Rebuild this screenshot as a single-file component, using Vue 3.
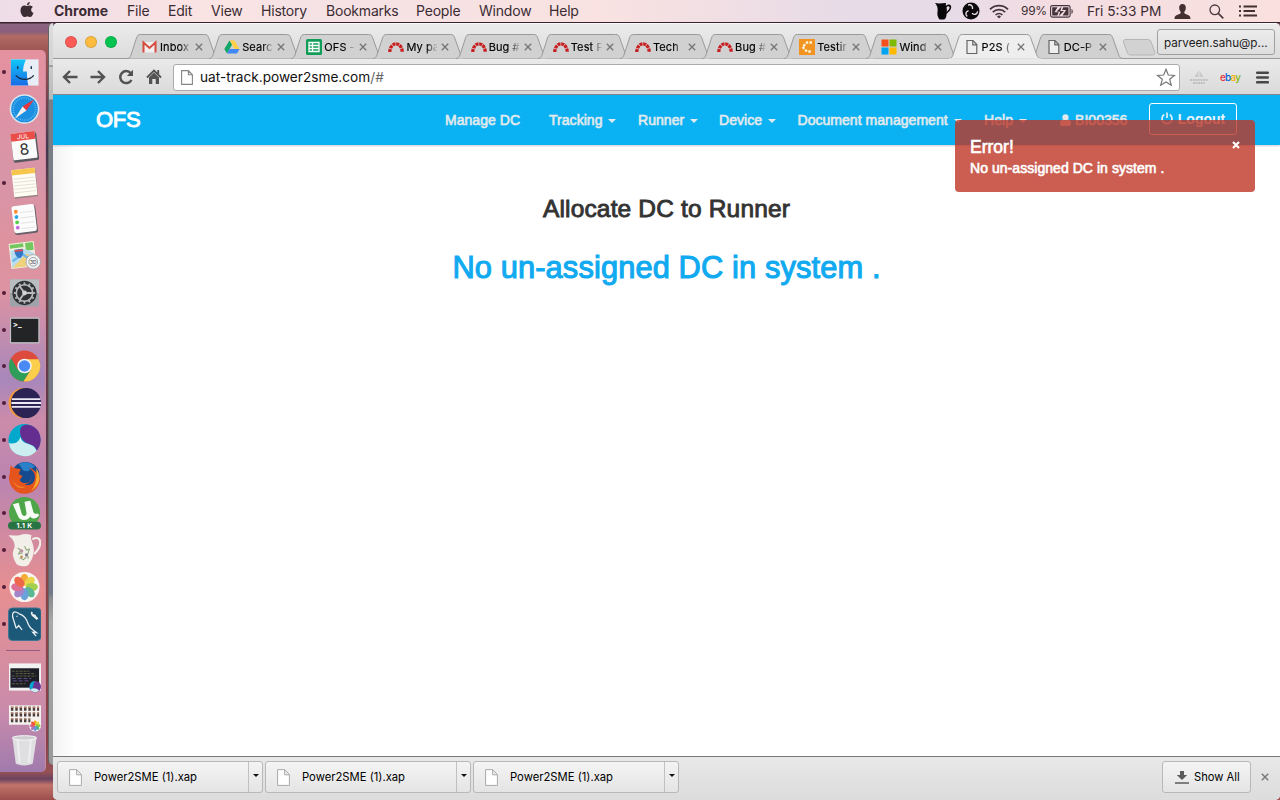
<script setup>
const menus = [
  { t: 'Chrome', w: 73, b: true }, { t: 'File', w: 41 }, { t: 'Edit', w: 43 }, { t: 'View', w: 50 },
  { t: 'History', w: 65 }, { t: 'Bookmarks', w: 90 }, { t: 'People', w: 63 }, { t: 'Window', w: 70 }, { t: 'Help', w: 40 },
]
const tabs = [
  { t: 'Inbox', i: 'gmail' }, { t: 'Searc', i: 'drive' }, { t: 'OFS -', i: 'sheets' }, { t: 'My pa', i: 'redmine' },
  { t: 'Bug #', i: 'redmine' }, { t: 'Test F', i: 'redmine' }, { t: 'Tech', i: 'redmine' }, { t: 'Bug #', i: 'redmine' },
  { t: 'Testir', i: 'orange' }, { t: 'Wind', i: 'ms' }, { t: 'P2S (', i: 'doc', on: true }, { t: 'DC-P', i: 'doc' },
]
const nav = [
  { t: 'Manage DC', w: 104 }, { t: 'Tracking', w: 89, c: true }, { t: 'Runner', w: 81, c: true },
  { t: 'Device', w: 78.5, c: true }, { t: 'Document management', w: 186.5, c: true }, { t: 'Help', w: 76, c: true },
]
const petals = ['#f5a623', '#e8d33a', '#9ccb3b', '#4db28a', '#5b9bd8', '#9a78c4', '#d9628e', '#ee5a3a']
const downloads = [1, 2, 3]
const teeth = [0, 30, 60, 90, 120, 150, 180, 210, 240, 270, 300, 330]
</script>

<template>
  <div class="screen">
    <header class="menubar">
      <svg class="apple" width="14" height="16" viewBox="0 0 14 16"><path d="M9.8 0c.1 1.700-1.200 3.200-2.900 3.300C6.700 1.700 8.200.2 9.800 0zM7.100 4.200c.6 0 1.500-.8 2.900-.7 1.100.1 2.100.5 2.800 1.500-2.500 1.600-2 4.900.7 5.900-.6 1.600-1.900 4.200-3.400 4.200-1 0-1.400-.6-2.700-.6s-1.700.6-2.700.6C2.800 15.200.4 11.500.5 8.200c.1-2.900 1.900-4.600 3.800-4.600 1.200 0 2.100.6 2.800.6z" fill="#3b2c33"/></svg>
      <nav class="menus"><span v-for="m in menus" :key="m.t" :class="{ bold: m.b }" :style="{ width: m.w + 'px' }">{{ m.t }}</span></nav>
      <div class="status">
        <svg class="s1" width="17" height="18" viewBox="0 0 17 18"><path d="M0 1l4 .5 7-.5c-.3 1-.3 2 0 3 2.500-2.500 5.500-1.500 5.200 1.500-.3 3-3 4.500-4.700 6.500.2 2-.6 4.500-2.200 5.500H4.500C2.500 15 2 12 2.600 9 3 6 2 3 0 1zm11.500 4.500c.5 1.500.5 3 .2 4.500C13.500 8 15 6.500 14.500 4.800c-.6-1-2.200-.6-3 .7z" fill="#080608" fill-rule="evenodd"/></svg>
        <svg class="s2" width="18" height="18" viewBox="0 0 18 18"><circle cx="9" cy="9" r="8.500" fill="#0b090b"/><g fill="none" stroke="#eadce6" stroke-width="1.400"><path d="M6 3c3-1 5 1 4.500 4"/><path d="M6 3c3-1 5 1 4.500 4" transform="rotate(120 9 9)"/><path d="M6 3c3-1 5 1 4.500 4" transform="rotate(240 9 9)"/></g></svg>
        <svg class="s3" width="20" height="15" viewBox="0 0 20 15"><g fill="none" stroke="#43343c" stroke-width="1.700"><path d="M1 5.300a12.700 12.700 0 0 1 18 0"/><path d="M3.800 8.200a8.700 8.700 0 0 1 12.400 0"/><path d="M6.600 11a4.900 4.900 0 0 1 6.800 0"/></g><path d="M10 14.500l-2-2a2.800 2.800 0 0 1 4 0z" fill="#43343c"/></svg>
        <span class="pct">99%</span>
        <svg class="s4" width="24" height="13" viewBox="0 0 24 13"><rect x=".6" y=".6" width="19.500" height="11.500" rx="1.800" fill="none" stroke="#43343c" stroke-width="1.100"/><path d="M2.200 2.200h5.300L4.500 7.200h4.200l-1.300 3.400H2.200zM13.300 2.200h5.200v8.400h-6l3.600-5.600h-4z" fill="#43343c"/><path d="M11.500 1.500L6.500 6.800h3.700L8.700 11.300 14 6h-3.600z" fill="#43343c"/><path d="M21.500 4v5c1.700-.5 1.700-4.500 0-5z" fill="#43343c"/></svg>
        <span class="clock">Fri 5:33 PM</span>
        <svg class="s5" width="17" height="15" viewBox="0 0 17 15"><path d="M8.500 0c2.300 0 3.600 1.800 3.300 4.200-.2 1.800-.9 2.800-1.400 3.600-.5 1.400.2 2 1.600 2.500 2.700.9 4.500 1.500 4.500 4.700H.5c0-3.200 1.800-3.800 4.500-4.700 1.400-.5 2.100-1.100 1.600-2.500-.5-.8-1.200-1.800-1.400-3.600C4.900 1.800 6.200 0 8.500 0z" fill="#43302f"/></svg>
        <svg class="s6" width="15" height="15" viewBox="0 0 15 15"><circle cx="5.800" cy="5.800" r="4.800" fill="none" stroke="#4b3a3b" stroke-width="1.300"/><path d="M9.300 9.300l5 5" stroke="#4b3a3b" stroke-width="1.700"/></svg>
        <svg class="s7" width="19" height="12" viewBox="0 0 19 12"><path d="M4.500 1.500H18M4.500 6H16M4.500 10.500H18" stroke="#43302f" stroke-width="1.900"/><path d="M0 1.500h2M0 6h2M0 10.500h2" stroke="#43302f" stroke-width="1.900"/></svg>
      </div>
    </header>

    <main class="desk">
      <aside class="dock">
        <div class="slot"><svg viewBox="0 0 34 34"><defs><linearGradient id="fn" x2="0" y2="1"><stop stop-color="#10c8fa"/><stop offset="1" stop-color="#1a6be5"/></linearGradient></defs><path d="M3 4h28.500v27H3z" fill="#e8eef5"/><path d="M3 4h15.500c-2 4-3 8-3 12.500h4c0 5 .4 10 1.500 14.500H3z" fill="url(#fn)"/><path d="M10 11v3M24 11v3" stroke="#183552" stroke-width="1.500"/><path d="M8 20.500c5 5.500 14 5.500 18.500 0" fill="none" stroke="#14273c" stroke-width="1.400"/></svg></div>
        <div class="slot"><svg viewBox="0 0 34 34"><circle cx="17" cy="17" r="15.300" fill="#dce6ec"/><circle cx="17" cy="17" r="13.700" fill="#1b8fe2"/><circle cx="17" cy="17" r="11.500" fill="none" stroke="#8fd0f5" stroke-width="1.500" stroke-dasharray=".6 1.400"/><path d="M27 7L15 14.500l4 4z" fill="#e8343a"/><path d="M7 27l12-8.500-4-4z" fill="#f3f1ef"/></svg></div>
        <div class="slot"><svg viewBox="0 0 34 34"><g transform="rotate(-7 17 17)"><rect x="4" y="4" width="26.500" height="29" rx="2" fill="#59585f"/><rect x="4" y="3" width="25" height="27.500" rx="1.500" fill="#fafafa"/><path d="M4 3h25v8H4z" fill="#ea4c48"/><text x="16.500" y="9.500" font-size="6.500" text-anchor="middle" fill="#fff">JUL</text><text x="16.500" y="26" font-size="16" text-anchor="middle" fill="#303030">8</text></g></svg></div>
        <div class="slot run"><svg viewBox="0 0 34 34"><g transform="rotate(-6 17 17)"><path d="M5.500 3h24v29h-24z" fill="#9a8380"/><path d="M5 2.500h24v28H5z" fill="#fffdf3"/><path d="M5 2.500h24v5.500H5z" fill="#f7c64d"/><path d="M6 12h22M6 15.500h22M6 19h22M6 22.500h22M6 26h22" stroke="#d8d5cc" stroke-width=".7"/></g></svg></div>
        <div class="slot"><svg viewBox="0 0 34 34"><g transform="rotate(-7 17 17)"><rect x="5.500" y="3.500" width="24" height="29" rx="2.500" fill="#67606a"/><rect x="5" y="2.500" width="23.500" height="28" rx="2.500" fill="#fcfcfc"/><circle cx="9" cy="8.500" r="2" fill="#ff8c2e"/><circle cx="9" cy="14" r="2" fill="#28a9e6"/><circle cx="9" cy="19.500" r="2" fill="#55cf48"/><circle cx="9" cy="25" r="2" fill="#c66be0"/><path d="M13 10h14M13 15.500h14M13 21h14M13 26.500h14" stroke="#ddd" stroke-width=".8"/></g></svg></div>
        <div class="slot"><svg viewBox="0 0 34 34"><g transform="rotate(-7 15 16)"><path d="M2 3h26v26H2z" fill="#f4efdf"/><path d="M3 4h14v4H3zM19 4h8v8h-8z" fill="#73c75e"/><path d="M3 28V10h15l9 5v13z" fill="#b9dcef"/><path d="M3 28L19 15l8 5v8z" fill="#f0d27b"/><path d="M4 21l11-6 12 11" stroke="#6cb8ee" stroke-width="2.500" fill="none"/><path d="M7.500 9.500h8.500c.6 5-1 8-4.200 9.500-3.300-1.500-4.900-4.500-4.300-9.500z" fill="#3577c7"/><path d="M7.500 11h8.500" stroke="#df4c43" stroke-width="2"/></g><circle cx="26" cy="23" r="7.500" fill="#f1f2f4" stroke="#a7a9ae"/><circle cx="26" cy="23" r="4.500" fill="none" stroke="#888" stroke-width=".8"/><text x="26" y="25" text-anchor="middle" font-size="5" fill="#333">3D</text></svg></div>
        <div class="slot run"><svg viewBox="0 0 34 34"><rect x="2" y="3" width="30" height="28" rx="1" fill="#9da3a8"/><rect x="2" y="3" width="30" height="14" fill="#b8bdc1"/><circle cx="17" cy="17" r="12.500" fill="#303235"/><g stroke="#aeb0b2" stroke-width="2"><path v-for="a in teeth" :key="a" d="M17 6v3" :transform="`rotate(${a} 17 17)`"/></g><circle cx="17" cy="17" r="8.500" fill="none" stroke="#b9bbbd" stroke-width="1.700"/><path d="M17 17h8M17 17l-5-7M17 17l-5 7" stroke="#b9bbbd" stroke-width="2"/><circle cx="17" cy="17" r="2.500" fill="#d0d1d2"/></svg></div>
        <div class="slot run"><svg viewBox="0 0 34 34"><rect x="2" y="4" width="30.500" height="27" rx="1.500" fill="#bfc1c3"/><rect x="3.200" y="5.500" width="28" height="24" fill="#222426"/><text x="5" y="14" font-size="8" font-weight="700" fill="#f2f2f2">&gt;_</text></svg></div>
        <div class="slot run"><svg viewBox="0 0 34 34"><circle cx="17" cy="17" r="16" fill="#dc4b3e"/><path d="M3.100 9A16 16 0 0 0 16 33l7.500-12.500L17 24l-7-3.500z" fill="#2f9e5b"/><path d="M31.500 10H17l6.700 10.500L16 33A16 16 0 0 0 31.500 10z" fill="#fbcf4b"/><circle cx="17" cy="17" r="7.500" fill="#f3f3f3"/><circle cx="17" cy="17" r="5.900" fill="#4a8af4"/></svg></div>
        <div class="slot run"><svg viewBox="0 0 34 34"><circle cx="16" cy="17" r="15.500" fill="#f49a3b"/><circle cx="18.500" cy="17" r="15.500" fill="#2b2354"/><path d="M4 13h29.500M3.500 17H34M4 21h29.500" stroke="#ede9f6" stroke-width="2"/></svg></div>
        <div class="slot run"><svg viewBox="0 0 34 34"><circle cx="17" cy="17" r="16.500" fill="#00a8cc"/><path d="M14 3C19-1 28 2 31.500 8.500c3.500 7 2.500 14-2 19.500-1-5-5-6-9-7.500C13 18 10.500 8.500 14 3z" fill="#662d91"/><path d="M.8 20C7 22 11 19 13 14c1 5 4 6 8 7 4 1 7 3 8.500 7A16.500 16.500 0 0 1 .8 20z" fill="#cdeef0"/></svg></div>
        <div class="slot run"><svg viewBox="0 0 34 34"><circle cx="18" cy="16" r="14.500" fill="#164a8e"/><path d="M11 4c5-4 14-2 17 3-4 0-4 4-9 4s-4-4-8-7z" fill="#2b81c9"/><path d="M3 5c1 2 3 3 5 3l5 1-2 5 4 2-3 4c3 5 10 4 12-1 2-6-1-9-2-12 6 3 10 8 11 13A16 16 0 1 1 2 13c0-3 0-6 1-8z" fill="#e5541d"/><path d="M22 8c5 3 7 8 5 13-2 4-6 5-10 4 3-1 6-3 7-6 1-5-1-8-2-11z" fill="#164a8e"/><path d="M29 8c6 8 4 18-5 23 5-5 6-14 5-23z" fill="#f8a92f"/><path d="M4 18c2 6 7 10 14 9-4 3-11 2-14-9z" fill="#f38128"/></svg></div>
        <div class="slot run"><svg viewBox="0 0 34 34"><circle cx="17" cy="16.500" r="16" fill="#4da748"/><path d="M5 8l6-1.500 3 11c1 4 6 3 5-1L17 5.500l6-1 3 11c.5 2 2.500 3 5 2l1 2c-3 4-7 4-9 1-3 5-11 5-13-1z" fill="#f7fbf5"/><rect x="0" y="26" width="34" height="8" rx="4" fill="#287343"/><text x="17" y="32.500" font-size="7" font-weight="700" letter-spacing=".4" text-anchor="middle" fill="#fff">1.1 K</text></svg></div>
        <div class="slot run"><svg viewBox="0 0 34 34"><path d="M25 6c9-5 12 5 2 15" fill="none" stroke="#f2eee8" stroke-width="2.200"/><path d="M.5 2c4-1 8 1 12-.5s8-1.500 12 .5c-3 4 3 8 2 17-1 8-4 10-5 13-2 3-12 2-13-1-3-5-5-10-2-16C8 9 4 5 .5 2z" fill="#f2eee8"/><path d="M10 15l3 2-2 4 4-1M17 13l2 4 3-1-2 6 1 4M12 25l4 2 3-3" fill="none" stroke="#8fa67a" stroke-width="1.100"/><circle cx="14" cy="18" r="1.800" fill="#b893a5"/><circle cx="19" cy="22" r="1.600" fill="#7c7d8e"/><circle cx="14" cy="24" r="1.300" fill="#c08a49"/></svg></div>
        <div class="slot run"><svg viewBox="0 0 34 34"><circle cx="17" cy="17" r="15.500" fill="#f8f6f3"/><g opacity=".9"><ellipse v-for="(p, k) in petals" :key="p" cx="17" cy="9.500" rx="4.200" ry="6.200" :fill="p" :transform="`rotate(${k * 45} 17 17)`"/></g></svg></div>
        <div class="slot run"><svg viewBox="0 0 34 34"><rect x=".5" y=".5" width="33.500" height="33.500" rx="4" fill="#1c5878" stroke="#3f7694"/><path d="M8.500 21.500C7 17 6.500 15 5.500 12 4 8 4.500 4.500 7 4.500c2 0 3 1 4.500 2 6 1.500 8 6 9.500 11 1.500 4 4.500 5 8.500 8.500l-4-.5 3.500 4M8.500 21.500l2.500-3 3.500 4.500M9 8.500l.5 1" fill="none" stroke="#e9f1f5" stroke-width="1.300"/><path d="M25.500 7.500l5 4.500" stroke="#f0f0f0" stroke-width="2.500"/><path d="M24.500 4.500c-.5 3 1 4.500 4 3.500" fill="none" stroke="#f0f0f0" stroke-width="1.800"/></svg></div>
        <hr class="rule" />
        <div class="slot mini"><svg viewBox="0 0 34 34"><rect x="1" y="3" width="33" height="28" fill="#f2f2f3"/><path d="M2.500 8H32v20H2.500z" fill="#1c1d25"/><path d="M4 11h18M8 13.500h20M4 16h25M4 24h14" stroke="#686a45" stroke-width=".9" stroke-dasharray="3 1"/><path d="M4 18.500h20M5 21h16" stroke="#66518c" stroke-width="1" stroke-dasharray="4 2"/><circle cx="28" cy="27" r="6" fill="#6a3593"/><path d="M28 21a6 6 0 0 0-5 9c4 0 2-6 5-9z" fill="#00a8cc"/><path d="M23 30c3-2 6-2 9 1-3 3-7 2-9-1z" fill="#cdeef0"/></svg></div>
        <div class="slot mini b"><svg viewBox="0 0 34 34"><rect x="1" y="6" width="33" height="20" fill="#f4f1ef"/><path d="M3 9.500h29M3 15.500h29M3 21.500h20" stroke="#4a3a38" stroke-width="4" stroke-dasharray="2.500 2"/><path d="M3 8h29M3 14h29M3 20h20" stroke="#b98672" stroke-width="1.400" stroke-dasharray="2.500 2"/><circle cx="28" cy="27" r="6" fill="#fff"/><ellipse v-for="(p, k) in petals" :key="p" cx="28" cy="24" rx="1.700" ry="2.600" :fill="p" :transform="`rotate(${k * 45} 28 27)`"/></svg></div>
        <div class="slot mini c"><svg viewBox="0 0 34 34"><path d="M4.500 3L8 30c3 2.500 14.500 2.500 17.500 0L29.500 3z" fill="#dfdfe2"/><path d="M10 5l2 24M23.500 5l-2 24" stroke="#eee" stroke-width="2"/><ellipse cx="17" cy="3.500" rx="12.500" ry="2.300" fill="#cfcfd3" stroke="#f7f7f8"/></svg></div>
      </aside>
      <div class="behind"></div>
      <section class="window">
        <div class="strip">
          <div class="lights"><i class="r"></i><i class="y"></i><i class="g"></i></div>
          <div class="tabs">
            <div v-for="(tab, n) in tabs" :key="n" class="tab" :class="{ on: tab.on }">
              <svg class="shape" width="92" height="26" viewBox="0 0 92 26"><path d="M0 24.500c2.500-.3 3-1.200 4-3.500L9.500 4c1-2.500 1.500-3.500 4-3.500h64c2.500 0 3.300 1 4.200 3.300l6 17c1 2.500 1.500 3.400 4.300 3.700" /><path v-if="tab.on" class="join" d="M0 25.200h92" /></svg>
              <div class="inner">
                <svg class="fav" width="16" height="16" viewBox="0 0 16 16">
                  <g v-if="tab.i === 'gmail'"><path d="M1 3h13v10.500H1z" fill="#f1eeee"/><path d="M1.500 13.500V3.500L7.500 9l6-5.500v10" fill="none" stroke="#d54b3d" stroke-width="2"/></g>
                  <g v-else-if="tab.i === 'drive'"><path d="M5.500 1.500h5l5 8.500h-5z" fill="#ffcf48"/><path d="M5.500 1.500L8 5.800 3 14.500.3 10z" fill="#11a566"/><path d="M5.500 10h10L13 14.500H3z" fill="#4286f5"/></g>
                  <g v-else-if="tab.i === 'sheets'"><rect width="16" height="16" rx="1.500" fill="#0f9d58"/><path d="M3 3.500h10v9H3zM3 6.500h10M3 9.500h10M6.500 3.500v9" fill="none" stroke="#fff" stroke-width="1.300"/></g>
                  <path v-else-if="tab.i === 'redmine'" d="M1.800 13a6.200 8.200 0 0 1 12.400 0" fill="none" stroke="#c81e20" stroke-width="3.300" stroke-dasharray="3.100 .7"/>
                  <g v-else-if="tab.i === 'orange'"><rect width="16" height="16" fill="#f19421"/><path d="M13 3.500H8L3.500 8 8 12.500h5" fill="none" stroke="#fff3da" stroke-width="2.300" stroke-dasharray="2.500 1.300"/></g>
                  <g v-else-if="tab.i === 'ms'"><path d="M.5.500h7v7h-7z" fill="#f6511d"/><path d="M8.500.500h7v7h-7z" fill="#7fba00"/><path d="M.5 8.500h7v7h-7z" fill="#01a4ef"/><path d="M8.500 8.500h7v7h-7z" fill="#ffb901"/></g>
                  <path v-else d="M3 1.500h6l3.800 4v9H3zM8.800 1.800v4h3.700" fill="#eee" stroke="#656565" stroke-width="1.200"/>
                </svg>
                <span class="title">{{ tab.t }}</span>
                <svg class="x" width="8" height="8" viewBox="0 0 8 8"><path d="M.8.8l6.400 6.400M7.200.8L.8 7.200" stroke="#757575" stroke-width="1.300"/></svg>
              </div>
            </div>
          </div>
          <svg class="newtab" width="34" height="17" viewBox="0 0 34 17"><path d="M4 .5h21.500c2 0 3 .7 3.700 2.500l3.500 10c.5 2-.2 3-2 3H9c-2 0-3-.7-3.700-2.500L1.500 3.500C1 1.500 2 .5 4 .5z" fill="#d2d2d2" stroke="#b5b5b5"/></svg>
          <div class="profile">parveen.sahu@p...</div>
        </div>

        <div class="toolbar">
          <svg width="16" height="14" viewBox="0 0 16 14"><path d="M15.500 7H2M8 1L2 7l6 6" fill="none" stroke="#525252" stroke-width="2.400"/></svg>
          <svg width="16" height="14" viewBox="0 0 16 14"><path d="M.5 7H14M8 1l6 6-6 6" fill="none" stroke="#525252" stroke-width="2.400"/></svg>
          <svg width="16" height="16" viewBox="0 0 16 16"><path d="M12.800 4.200A6 6 0 1 0 13.500 11" fill="none" stroke="#525252" stroke-width="2.500"/><path d="M15 .8V7H8.800z" fill="#525252"/></svg>
          <svg width="16" height="16" viewBox="0 0 16 16"><path d="M1 8.500L8 1.500l7 7M12.200 1v4" fill="none" stroke="#525252" stroke-width="1.900"/><path d="M3 8.500l5-5 5 5V15H9.700v-5H6.300v5H3z" fill="#525252"/></svg>
          <div class="omni">
            <svg width="12" height="15" viewBox="0 0 12 15"><path d="M.6.600h6.800l4 4.200v9.600H.6zM7.400.800v4h4" fill="#fff" stroke="#858585" stroke-width="1.100"/></svg>
            <span class="url">uat-track.power2sme.com<em>/#</em></span>
            <svg class="star" width="20" height="19" viewBox="0 0 20 19"><path d="M10 1.300l2.300 5.700 6.200.4-4.800 3.900 1.600 6L10 14l-5.300 3.300 1.600-6-4.800-3.900 6.200-.4z" fill="#fff" stroke="#777" stroke-width="1.200"/></svg>
          </div>
          <div class="ext"><svg width="18" height="16" viewBox="0 0 18 16"><path d="M9 1l4.500 7h-9z" fill="#c9c9c9"/><path d="M9 1v7" stroke="#e6e6e6"/><path d="M0 11h18M3 14h12" stroke="#c0c0c0" stroke-width="2" stroke-dasharray="2 .6"/></svg></div>
          <div class="ebay"><b>e</b><b>b</b><b>a</b><b>y</b></div>
          <svg class="burger" width="13" height="13" viewBox="0 0 13 13"><path d="M1.200 1.700h10.600M1.200 6.500h10.600M1.200 11.300h10.600" stroke="#484848" stroke-width="2.600" stroke-linecap="round"/></svg>
        </div>

        <div class="page">
          <div class="navbar">
            <div class="brand">OFS</div>
            <nav class="links">
              <span v-for="l in nav" :key="l.t" :style="{ width: l.w + 'px' }">{{ l.t }}<i v-if="l.c" class="caret"></i></span>
              <span class="user"><svg width="11" height="12" viewBox="0 0 11 12"><circle cx="5.500" cy="3.300" r="3.100" fill="#e3eaed"/><path d="M0 10c0-3 1.300-4.500 3-4.500 1.500 1.200 3.500 1.200 5 0 1.700 0 3 1.500 3 4.500 0 1.300-.8 2-2 2H2c-1.200 0-2-.7-2-2z" fill="#e3eaed"/></svg>BI00356</span>
            </nav>
            <button class="logout"><svg width="12" height="13" viewBox="0 0 12 13"><path d="M3.300 2.500a5 5 0 1 0 5.400 0M6 .500v5.500" fill="none" stroke="#dff1f9" stroke-width="1.700"/></svg>Logout</button>
          </div>
          <h3>Allocate DC to Runner</h3>
          <h2>No un-assigned DC in system .</h2>
          <div class="toast">
            <svg width="8" height="8" viewBox="0 0 8 8"><path d="M1 1l6 6M7 1L1 7" stroke="#fff" stroke-width="2.100"/></svg>
            <div class="tt">Error!</div>
            <div class="tm">No un-assigned DC in system .</div>
          </div>
        </div>

        <footer class="shelf">
          <div v-for="d in downloads" :key="d" class="dl">
            <svg width="13" height="17" viewBox="0 0 13 17"><path d="M.6.600h7l4.800 5v10.800H.6zM7.600.800v5h4.600" fill="#fff" stroke="#a9a9a9"/></svg>
            <span>Power2SME (1).xap</span>
            <div class="drop"><i></i></div>
          </div>
          <div class="all"><svg width="14" height="13" viewBox="0 0 14 13"><path d="M5 0h4v4h3.200L7 9 1.800 4H5z" fill="#5a5a5a"/><path d="M0 12h14" stroke="#5a5a5a" stroke-width="1.500"/></svg><span>Show All</span></div>
          <svg class="sx" width="8" height="8" viewBox="0 0 8 8"><path d="M.8.8l6.400 6.400M7.200.8L.8 7.200" stroke="#777" stroke-width="1.400"/></svg>
        </footer>
      </section>
    </main>
  </div>
</template>

<style>
body { overflow: hidden; }
</style>
<style scoped>
* { box-sizing: border-box; }
svg { flex: none; display: block; }
.screen { width: 1280px; height: 800px; display: flex; flex-direction: column; font-family: Inter, "Liberation Sans", sans-serif; overflow: hidden; background: linear-gradient(180deg, #3b2430 0, #3b2430 23px, #8b6580 24px, #8a5f7d 32px, #b26a64 36px, #9d5554 51px, #77434e 100px, #433850 150px, #7b4045 220px, #55394d 450px, #8c4543 560px, #874049 740px, #965155 772px, #6b4260 779px, #c17469 785px, #9b4d4b 800px); }
.menubar { height: 22px; display: flex; align-items: center; background: linear-gradient(90deg, #eedce7 0, #fbe4e3 220px, #f5e2e5 300px, #f9e2e1 600px, #e7dbe7 850px, #e7dbe8 950px, #f3dde2 1040px, #fae1df 1280px); color: #3b2c33; font-size: 14px; line-height: 22px; }
.apple { margin-left: 20px; margin-top: -2px; }
.menus { display: flex; margin-left: 20px; }
.menus span { white-space: nowrap; letter-spacing: -.2px; }
.menus .bold { font-weight: 700; letter-spacing: 0; }
.status { flex: 1; display: flex; align-items: center; justify-content: flex-end; padding-right: 22px; white-space: nowrap; }
.s2 { margin-left: 10px; } .s3 { margin-left: 9px; }
.pct { font-size: 12px; margin-left: 12px; width: 29px; letter-spacing: -.3px; }
.s4 { margin-top: 1px; }
.clock { margin-left: 13px; width: 76px; letter-spacing: 0; font-size: 13.700px; }
.s5 { margin-left: 11px; } .s6 { margin-left: 18px; } .s7 { margin-left: 15px; }
.desk { flex: 1; display: flex; align-items: flex-start; padding-top: 1px; }
.dock { width: 46px; height: 722px; margin-top: 27px; padding-top: 4px; border-radius: 0 5px 5px 0; background: linear-gradient(180deg, #e591a0 0, #d795a8 130px, #de929e 190px, #dd93a2 240px, #a887bb 330px, #cc8baa 370px, #ba85b1 430px, #e78f91 540px, #d98e9d 600px, #c98bab 660px, #a07bad 722px); border-right: 1px solid #c7899c; }
.slot { height: 36.750px; display: flex; align-items: center; padding-left: 8px; }
.slot svg { width: 33px; height: 34px; }
.slot.run::before, .slot:first-child::before { content: ""; width: 4px; height: 4px; border-radius: 2px; background: #541d3a; margin-left: -6px; margin-right: 2px; }
.rule { border: 0; height: 1px; background: #985d7c; width: 34px; margin: 7.500px 0 8px 6px; }
.mini.b { margin-top: 2px; }
.mini.c { margin-top: -1px; }
.behind { width: 5px; height: 742px; margin-left: 2px; border-radius: 5px 0 0 5px; border-left: 1px solid #666; background: linear-gradient(180deg, #ddd 0, #d2d2d2 42px, #777 43px, #c9c9c9 44px, #b9b9b9 76px, #7c7f88 77px, #737988 250px, #727889 570px, #8d8d91 576px, #aaa 600px, #a8a8a8 603px, #999 742px); }
.window { width: 1227px; height: 777px; display: flex; flex-direction: column; border-radius: 5px; overflow: hidden; background: #e5e5e5; }
.strip { height: 36px; display: flex; align-items: flex-start; background: linear-gradient(#ebebeb, #dcdcdc); border-top: 1px solid #f8f8f8; box-shadow: inset 0 -1px #9b9b9b; flex: none; }
.lights { display: flex; gap: 8px; margin: 12px 0 0 12px; width: 62px; }
.lights i { width: 12px; height: 12px; border-radius: 6px; border: .5px solid #0002; }
.r { background: #fc5b57; } .y { background: #fdbc40; } .g { background: #06c451; }
.tabs { display: flex; padding-top: 10px; }
.tab { display: grid; width: 92px; height: 25px; margin-right: -9.850px; }
.tab > * { grid-area: 1 / 1; }
.shape { fill: #d1d1d1; stroke: #9a9a9a; }
.on { z-index: 1; }
.on .shape { fill: #eeeeee; }
.on .join { stroke: #e9e9e9; stroke-width: 2; }
.inner { z-index: 1; display: flex; align-items: center; padding-left: 15px; height: 25px; }
.title { width: 31px; margin-left: 2px; white-space: nowrap; font-size: 11px; color: #000; letter-spacing: .1px; -webkit-text-stroke: .15px #000; -webkit-mask-image: linear-gradient(90deg, #000 66%, #0002 96%); mask-image: linear-gradient(90deg, #000 66%, #0002 96%); }
.x { margin-left: 4px; }
.newtab { margin: 14.500px 0 0 9px; }
.profile { margin: 5px 0 0 1px; width: 118px; height: 26px; border: 1px solid #a0a0a0; border-radius: 3px; background: linear-gradient(#ececec, #dedede); font-size: 11.700px; line-height: 26px; padding-left: 6px; color: #222; white-space: nowrap; }
.toolbar { height: 36px; flex: none; display: flex; align-items: center; padding: 1px 0 0 9px; gap: 12px; background: linear-gradient(#eaeaea, #dadada); border-bottom: 1px solid #85888b; }
.omni { width: 1007px; height: 27px; display: flex; align-items: center; border: 1px solid #ababab; border-radius: 3px; background: #fff; padding: 0 3px 0 7px; margin-left: -1px; }
.url { margin-left: 7px; font-size: 13.650px; color: #111; flex: 1; }
.url em { font-style: normal; color: #666; }
.ext { margin-left: -2px; }
.ebay { font-size: 10px; letter-spacing: -.8px; width: 20px; display: flex; }
.ebay b { font-weight: 500; }
.ebay b:nth-child(1) { color: #e53238; } .ebay b:nth-child(2) { color: #0064d2; } .ebay b:nth-child(3) { color: #f5af02; } .ebay b:nth-child(4) { color: #86b817; }
.burger { margin-left: 4px; }
.page { flex: 1; position: relative; background: linear-gradient(90deg, #f2f2f2 0, #fff 22px); font-family: "Liberation Sans", Arial, sans-serif; }
.navbar { height: 50px; background: #0bb2f3; display: flex; align-items: center; box-shadow: 0 1px 2px #0003; }
.brand { width: 349px; margin-left: 43px; font-size: 22px; letter-spacing: -.3px; color: #fff; -webkit-text-stroke: .9px #fff; }
.links { display: flex; width: 704px; font-size: 14px; letter-spacing: .04px; color: #e3eaed; -webkit-text-stroke: .6px #e3eaed; }
.links span { flex: none; white-space: nowrap; display: flex; align-items: center; }
.caret { border: 4px solid transparent; border-top-color: #e3eaed; border-bottom: 0; margin-left: 6px; margin-top: 2px; }
.user svg { margin-right: 4px; }
.logout { width: 88px; height: 32px; margin-top: -3px; background: none; border: 1px solid #fff; border-radius: 3px; color: #e8f5fb; font: 700 14px "Liberation Sans", Arial, sans-serif; display: flex; align-items: center; justify-content: center; gap: 5px; padding: 0; }
h3, h2 { text-align: center; font-weight: 400; margin: 0; white-space: nowrap; }
h3 { margin-top: 49px; font-size: 24.500px; letter-spacing: .16px; line-height: 30px; color: #333; -webkit-text-stroke: .9px #333; }
h2 { margin-top: 26px; font-size: 30.800px; letter-spacing: .13px; line-height: 36px; color: #11aaf0; -webkit-text-stroke: 1.100px #11aaf0; }
.toast { position: absolute; right: 25px; top: 25px; width: 300px; height: 72px; border-radius: 4px; background: #be3626cc; color: #fff; padding: 17px 15px; }
.toast svg { float: right; margin-top: 4px; }
.tt { font-size: 17.500px; line-height: 21px; -webkit-text-stroke: .6px #fff; }
.tm { font-size: 14px; letter-spacing: .05px; line-height: 20px; -webkit-text-stroke: .6px #fff; }
.shelf { height: 44px; flex: none; display: flex; align-items: center; border-top: 1px solid #777; background: linear-gradient(#e8e8e8, #dcdcdc); padding: 0 11px 3px 4px; gap: 2px; }
.dl { width: 206px; height: 32px; display: flex; align-items: center; border: 1px solid #b8b8b8; border-radius: 3px; background: linear-gradient(#f4f4f4, #e4e4e4); padding-left: 11px; }
.dl span { margin-left: 12px; flex: 1; font-size: 11.250px; color: #000; }
.drop { width: 14px; height: 30px; border-left: 1px solid #c0c0c0; padding: 12px 0 0 4px; }
.drop i { display: block; width: 0; border: 3px solid transparent; border-top: 3.500px solid #111; border-bottom: 0; }
.all { width: 89px; height: 32px; margin-left: auto; border: 1px solid #b8b8b8; border-radius: 3px; background: linear-gradient(#f4f4f4, #e4e4e4); display: flex; align-items: center; padding-left: 12px; font-size: 11.200px; color: #000; gap: 5px; white-space: nowrap; }
.sx { margin-left: 8px; }
</style>
